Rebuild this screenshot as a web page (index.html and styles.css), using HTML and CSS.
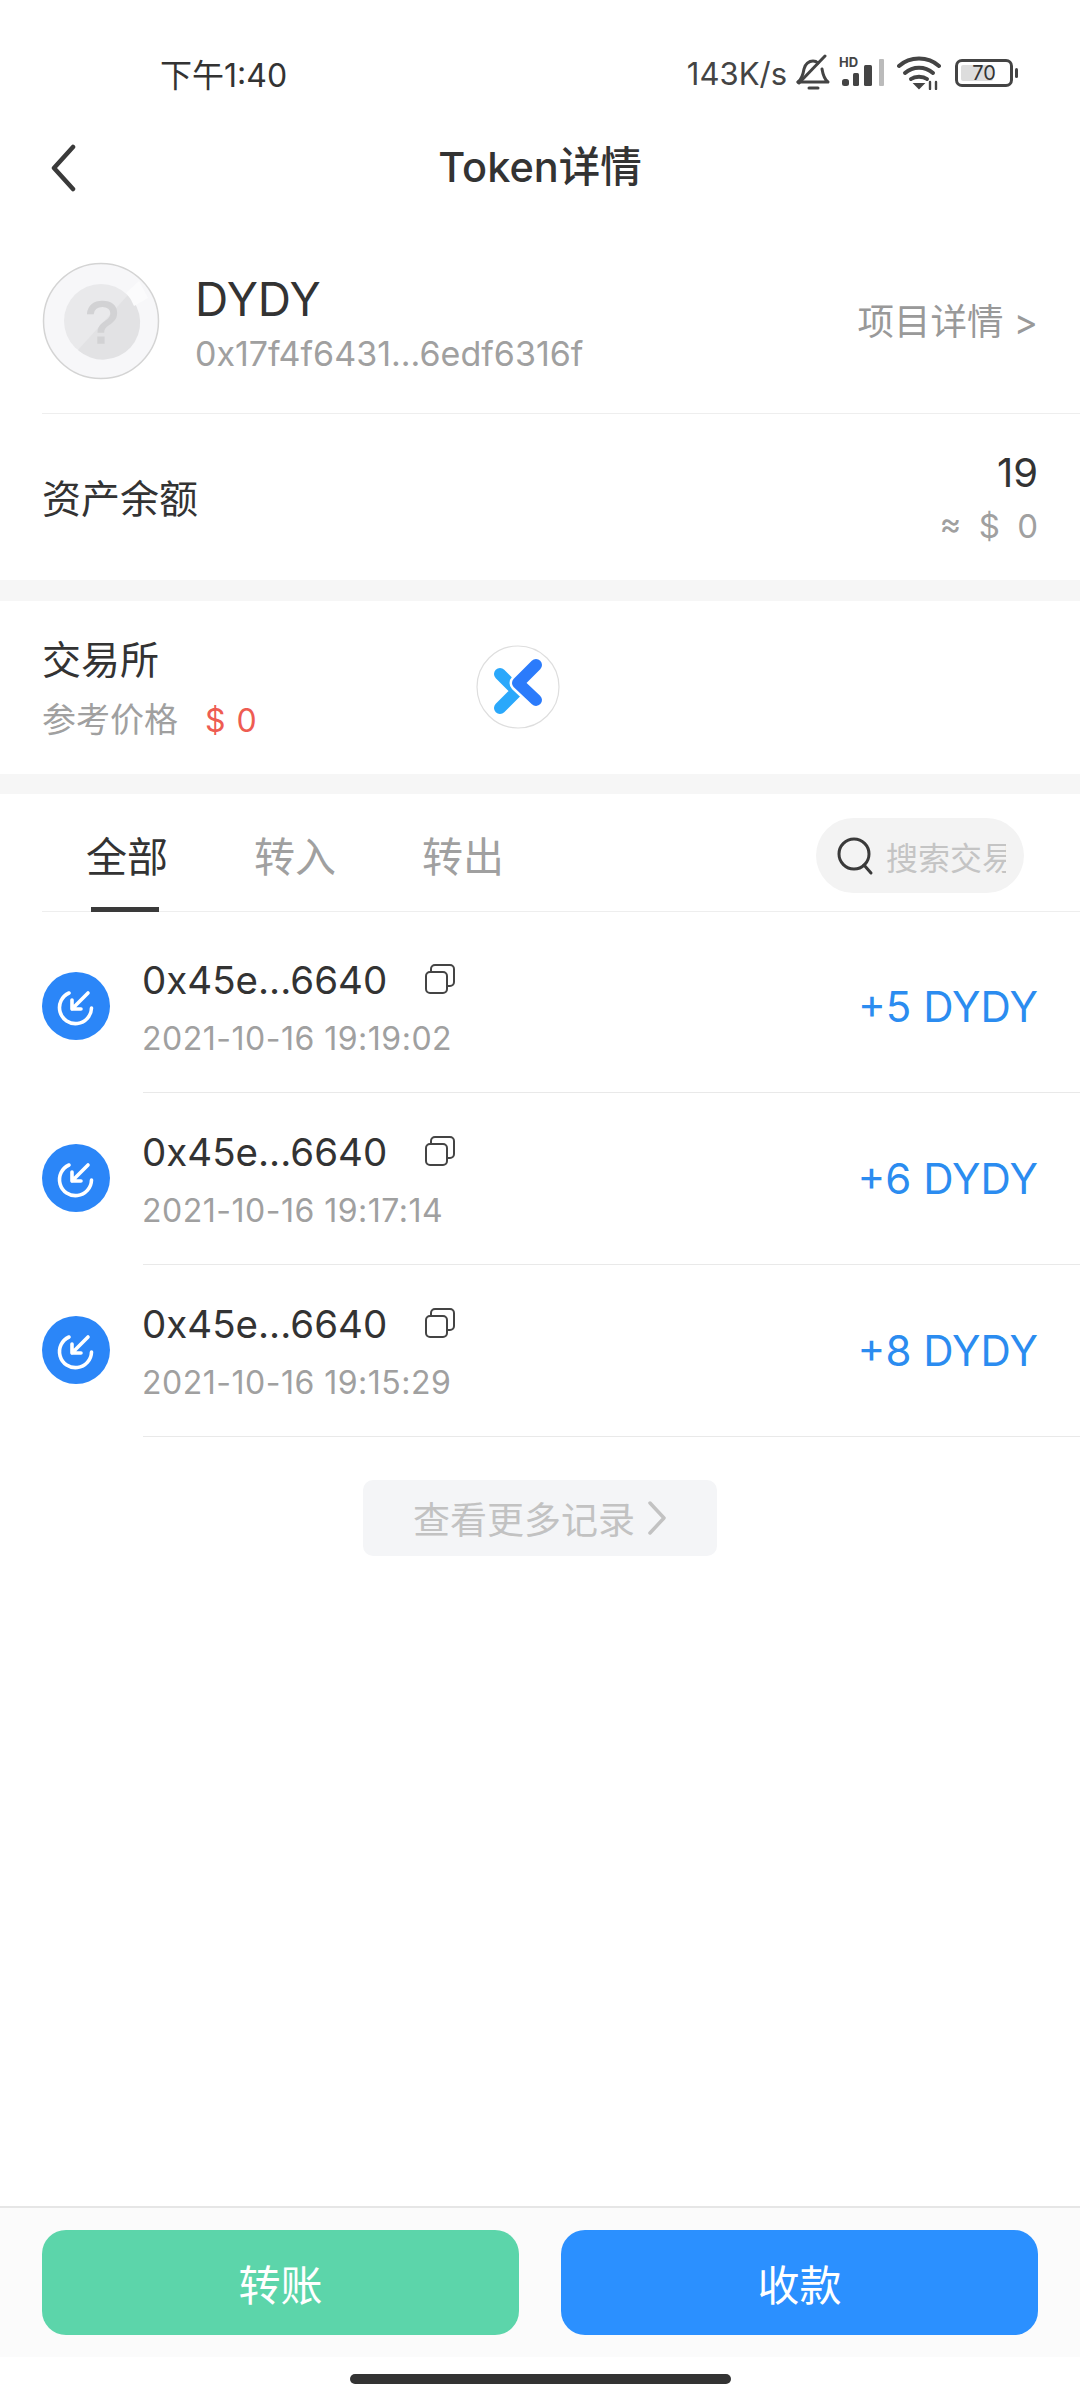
FILE: index.html
```html
<!DOCTYPE html>
<html lang="zh-CN">
<head>
  <meta charset="UTF-8">
  <title>Token详情</title>
  <link rel="stylesheet" href="styles.css">
</head>
<body>
<div class="page">

  <div class="status">
    <span class="time">下午1:40</span>
    <div class="status-right">
      <span class="speed">143K/s</span>
      <svg class="ic-bell" width="36" height="38" viewBox="0 0 36 38" fill="none" stroke="#444" stroke-width="3" stroke-linecap="round" stroke-linejoin="round">
        <path d="M3 28c4-3 5-7 6-13 1-5 5-8 9-8 2 0 4 1 5 2"/>
        <path d="M27 15c1 6 2 10 6 13H3"/>
        <path d="M4 29L30 2"/>
        <path d="M14 34h9" stroke-width="3"/>
      </svg>
      <svg class="ic-signal" width="48" height="36" viewBox="0 -4 48 36">
        <text class="hd" x="0" y="10">HD</text>
        <rect x="3" y="22" width="7" height="7" rx="2.500" fill="#444"/>
        <rect x="14" y="16" width="6" height="13" rx="1.500" fill="#444"/>
        <rect x="25" y="8" width="8" height="21" rx="1.500" fill="#444"/>
        <rect x="40" y="2" width="5" height="27" rx="1" fill="#bbb"/>
      </svg>
      <svg class="ic-wifi" width="44" height="34" viewBox="0 0 44 34" fill="none" stroke="#444" stroke-width="4" stroke-linecap="round">
        <path d="M2 10c11-10 29-10 40 0"/>
        <path d="M8 17c8-7 20-7 28 0"/>
        <path d="M14 23c4-3 12-3 16 0"/>
        <path d="M18 28l4 4 4-4z" fill="#444" stroke-width="2"/>
        <path d="M33 26v7M39 26v7" stroke-width="2.400"/>
      </svg>
      <div class="battery">
        <div class="battery-body"><span class="battery-fill"></span><span class="battery-num">70</span></div>
        <span class="battery-nub"></span>
      </div>
    </div>
  </div>

  <div class="nav">
    <svg class="back" width="30" height="48" viewBox="0 0 30 48" fill="none" stroke="#3a3a3a" stroke-width="4.500" stroke-linecap="round" stroke-linejoin="round">
      <path d="M25 3L6 24l19 21"/>
    </svg>
    <span class="nav-title">Token详情</span>
  </div>

  <div class="token">
    <svg class="token-logo" width="118" height="118" viewBox="0 0 118 118">
      <circle cx="59" cy="59" r="57.500" fill="#f7f7f9" stroke="#d4d4d4" stroke-width="1.500"/>
      <circle cx="59" cy="59" r="37" fill="#e9e9eb"/>
      <path d="M86 33L36 88A37 37 0 0 0 86 33z" fill="#e2e2e4"/>
      <path d="M84 31L97 19 106 36 92 44a37 37 0 0 0-8-13z" fill="#fbfbfc"/>
      <text class="token-q" x="60" y="81">?</text>
    </svg>
    <div class="token-info">
      <div class="token-name">DYDY</div>
      <div class="token-addr">0x17f4f6431...6edf6316f</div>
    </div>
    <div class="token-link">项目详情 &gt;</div>
  </div>

  <div class="balance">
    <span class="balance-label">资产余额</span>
    <div class="balance-right">
      <div class="balance-num">19</div>
      <div class="balance-usd">≈ $ 0</div>
    </div>
  </div>

  <div class="band"></div>

  <div class="exchange">
    <div class="exchange-info">
      <div class="exchange-title">交易所</div>
      <div class="exchange-price">参考价格<span class="price-red">$ 0</span></div>
    </div>
    <svg class="exchange-logo" width="84" height="84" viewBox="0 0 84 84" fill="none" stroke-linecap="round" stroke-linejoin="round">
      <circle cx="42" cy="42" r="41" fill="#fff" stroke="#dedede" stroke-width="1.200"/>
      <path d="M24 29l17 17-17 17" stroke="#2aa8fb" stroke-width="12"/>
      <path d="M60 20L42 38l18 17" stroke="#fff" stroke-width="17"/>
      <path d="M60 20L42 38l18 17" stroke="#2b7bfb" stroke-width="12"/>
    </svg>
  </div>

  <div class="band band-short"></div>

  <div class="tabs">
    <div class="tab tab-on">全部</div>
    <div class="tab">转入</div>
    <div class="tab">转出</div>
    <div class="search">
      <svg width="40" height="40" viewBox="0 0 40 40" fill="none" stroke="#3a3a3a" stroke-width="3" stroke-linecap="round">
        <circle cx="18" cy="18" r="15"/>
        <path d="M28 29l7 8"/>
      </svg>
      <span class="search-text">搜索交易</span>
    </div>
  </div>

  <div class="list">
    <div class="row">
      <svg class="row-icon" width="68" height="68" viewBox="0 0 68 68" fill="none" stroke="#fff" stroke-width="3.600" stroke-linecap="round" stroke-linejoin="round">
        <circle cx="34" cy="34" r="34" fill="#2b86f8" stroke="none"/>
        <path d="M27 21a16 16 0 1 0 22.500 15"/>
        <path d="M46 21L30 37M30 28v9h9"/>
      </svg>
      <div class="row-body">
        <div class="row-main">
          <div class="row-addr">
            <span>0x45e...6640</span>
            <svg class="copy" width="30" height="30" viewBox="0 0 30 30" fill="none" stroke="#444" stroke-width="2" stroke-linejoin="round">
              <rect x="1" y="8" width="21" height="21" rx="4"/>
              <path d="M6 8V5a4 4 0 0 1 4-4h15a4 4 0 0 1 4 4v13a4 4 0 0 1-4 4h-3"/>
            </svg>
          </div>
          <div class="row-date">2021-10-16 19:19:02</div>
        </div>
        <div class="row-amount">+5 DYDY</div>
      </div>
    </div>
    <div class="row">
      <svg class="row-icon" width="68" height="68" viewBox="0 0 68 68" fill="none" stroke="#fff" stroke-width="3.600" stroke-linecap="round" stroke-linejoin="round">
        <circle cx="34" cy="34" r="34" fill="#2b86f8" stroke="none"/>
        <path d="M27 21a16 16 0 1 0 22.500 15"/>
        <path d="M46 21L30 37M30 28v9h9"/>
      </svg>
      <div class="row-body">
        <div class="row-main">
          <div class="row-addr">
            <span>0x45e...6640</span>
            <svg class="copy" width="30" height="30" viewBox="0 0 30 30" fill="none" stroke="#444" stroke-width="2" stroke-linejoin="round">
              <rect x="1" y="8" width="21" height="21" rx="4"/>
              <path d="M6 8V5a4 4 0 0 1 4-4h15a4 4 0 0 1 4 4v13a4 4 0 0 1-4 4h-3"/>
            </svg>
          </div>
          <div class="row-date">2021-10-16 19:17:14</div>
        </div>
        <div class="row-amount">+6 DYDY</div>
      </div>
    </div>
    <div class="row">
      <svg class="row-icon" width="68" height="68" viewBox="0 0 68 68" fill="none" stroke="#fff" stroke-width="3.600" stroke-linecap="round" stroke-linejoin="round">
        <circle cx="34" cy="34" r="34" fill="#2b86f8" stroke="none"/>
        <path d="M27 21a16 16 0 1 0 22.500 15"/>
        <path d="M46 21L30 37M30 28v9h9"/>
      </svg>
      <div class="row-body">
        <div class="row-main">
          <div class="row-addr">
            <span>0x45e...6640</span>
            <svg class="copy" width="30" height="30" viewBox="0 0 30 30" fill="none" stroke="#444" stroke-width="2" stroke-linejoin="round">
              <rect x="1" y="8" width="21" height="21" rx="4"/>
              <path d="M6 8V5a4 4 0 0 1 4-4h15a4 4 0 0 1 4 4v13a4 4 0 0 1-4 4h-3"/>
            </svg>
          </div>
          <div class="row-date">2021-10-16 19:15:29</div>
        </div>
        <div class="row-amount">+8 DYDY</div>
      </div>
    </div>
  </div>

  <div class="more">
    <span>查看更多记录</span>
    <svg width="20" height="34" viewBox="0 0 20 34" fill="none" stroke="#c2c2c2" stroke-width="3.500" stroke-linecap="round" stroke-linejoin="round">
      <path d="M3 2l14 15L3 32"/>
    </svg>
  </div>

  <div class="footer">
    <div class="btn btn-green">转账</div>
    <div class="btn btn-blue">收款</div>
  </div>
  <div class="home"><span class="home-bar"></span></div>

</div>
</body>
</html>
```

FILE: styles.css
```css
* {
  box-sizing: border-box;
}

html, body {
  margin: 0;
  background: #fff;
}

body {
  font-family: Inter, "Noto Sans CJK SC", sans-serif;
  color: #333;
}

.page {
  width: 1080px;
  height: 2400px;
  display: flex;
  flex-direction: column;
  overflow: hidden;
}

/* status bar */
.status {
  height: 110px;
  flex: none;
  display: flex;
  align-items: center;
  justify-content: space-between;
  padding: 40px 62px 0 160px;
}

.time {
  font-size: 32px;
  margin-top: -4px;
  color: #333;
}

.status-right {
  display: flex;
  align-items: center;
  margin-top: -4px;
}

.speed {
  font-size: 31px;
  color: #444;
}

.ic-bell {
  margin-left: 8px;
}

.ic-signal {
  margin-left: 8px;
  margin-top: -4px;
}

.hd {
  font-family: Inter, sans-serif;
  font-size: 13px;
  font-weight: 700;
  fill: #444;
}

.ic-wifi {
  margin-left: 10px;
}

.battery {
  display: flex;
  align-items: center;
  margin-left: 14px;
}

.battery-body {
  width: 58px;
  height: 28px;
  border: 3px solid #444;
  border-radius: 7px;
  padding: 3px;
  position: relative;
}

.battery-fill {
  display: block;
  width: 70%;
  height: 100%;
  background: #ddd;
  border-radius: 2px;
}

.battery-num {
  position: absolute;
  top: 0;
  left: 0;
  right: 0;
  text-align: center;
  font-size: 20px;
  line-height: 22px;
  color: #333;
}

.battery-nub {
  width: 3px;
  height: 10px;
  margin-left: 2px;
  background: #444;
  border-radius: 2px;
}

/* nav */
.nav {
  height: 114px;
  flex: none;
  display: flex;
  align-items: center;
  justify-content: center;
  position: relative;
}

.back {
  position: absolute;
  left: 48px;
  top: 34px;
}

.nav-title {
  font-size: 41.5px;
  font-weight: 500;
  margin-top: -6px;
  color: #333;
}

/* token head */
.token {
  flex: none;
  height: 190px;
  margin-left: 42px;
  padding: 38px 42px 0 0;
  display: flex;
  align-items: flex-start;
  border-bottom: 1px solid #eee;
}

.token-q {
  font-family: "Liberation Sans", sans-serif;
  font-size: 60px;
  text-anchor: middle;
  fill: #d2d2d4;
  stroke: #d2d2d4;
  stroke-width: 1.5px;
}

.token-info {
  margin-left: 35px;
  flex: 1;
}

.token-name {
  font-size: 46px;
  line-height: 54px;
  margin-top: 10px;
  color: #333;
}

.token-addr {
  font-size: 34px;
  line-height: 40px;
  margin-top: 8px;
  color: #a0a0a0;
}

.token-link {
  font-size: 36.5px;
  line-height: 44px;
  margin-top: 38px;
  color: #999;
}

/* balance */
.balance {
  flex: none;
  height: 166px;
  padding: 0 42px;
  display: flex;
  align-items: center;
  justify-content: space-between;
}

.balance-label {
  font-size: 39px;
  margin-top: -2px;
  color: #333;
}

.balance-right {
  text-align: right;
}

.balance-num {
  font-size: 40px;
  line-height: 48px;
  margin-top: 1px;
  color: #333;
}

.balance-usd {
  font-size: 33px;
  line-height: 40px;
  margin-top: 9px;
  color: #a0a0a0;
  word-spacing: 8px;
}

.band {
  flex: none;
  height: 21px;
  background: #f6f6f6;
}

.band-short {
  height: 20px;
}

/* exchange */
.exchange {
  flex: none;
  height: 173px;
  padding-left: 42px;
  display: flex;
  align-items: center;
}

.exchange-info {
  width: 434px;
}

.exchange-title {
  font-size: 39px;
  line-height: 46px;
  margin-top: 4px;
  color: #333;
}

.exchange-price {
  font-size: 34px;
  line-height: 42px;
  margin-top: 16px;
  color: #a0a0a0;
}

.price-red {
  margin-left: 27px;
  font-size: 32px;
  color: #ee5c52;
  word-spacing: 2px;
}

.exchange-logo {
  margin-top: -2px;
}

/* tabs */
.tabs {
  flex: none;
  height: 118px;
  margin-left: 42px;
  padding: 0 56px 0 44px;
  display: flex;
  align-items: center;
  gap: 86px;
  border-bottom: 1px solid #eee;
  position: relative;
}

.tab {
  font-size: 41px;
  line-height: 126px;
  height: 118px;
  color: #a0a0a0;
  position: relative;
}

.tab-on {
  color: #333;
}

.tab-on::after {
  content: "";
  position: absolute;
  left: 5px;
  right: 9px;
  bottom: 0;
  height: 5px;
  background: #3a3a3a;
}

.search {
  width: 208px;
  height: 75px;
  margin-left: auto;
  margin-top: 6px;
  padding: 0 0 0 20px;
  display: flex;
  align-items: center;
  gap: 10px;
  background: #f3f3f3;
  border-radius: 38px;
  overflow: hidden;
  flex: none;
}

.search svg {
  flex: none;
}

.search-text {
  font-size: 32px;
  color: #c4c4c4;
  width: 120px;
  flex: none;
  overflow: hidden;
  white-space: nowrap;
}

/* records */
.list {
  flex: none;
  margin-top: 9px;
  padding-left: 42px;
}

.row {
  height: 172px;
  display: flex;
  align-items: flex-start;
}

.row-icon {
  flex: none;
  margin-top: 51px;
}

.row-body {
  flex: 1;
  height: 172px;
  margin-left: 33px;
  padding-right: 42px;
  display: flex;
  align-items: center;
  justify-content: space-between;
  border-bottom: 1px solid #e9e9e9;
}

.row-addr {
  display: flex;
  align-items: center;
  font-size: 38.5px;
  line-height: 46px;
  color: #333;
  margin-left: -1px;
}

.copy {
  margin-left: 38px;
  margin-top: -2px;
}

.row-date {
  font-size: 32px;
  line-height: 40px;
  letter-spacing: 0.5px;
  margin: 16px 0 -3px -1px;
  color: #a0a0a0;
}

.row-amount {
  font-size: 42px;
  color: #2b8cf0;
}

.more {
  flex: none;
  width: 354px;
  height: 76px;
  margin: 43px auto 0;
  display: flex;
  align-items: center;
  justify-content: center;
  gap: 12px;
  background: #f4f5f7;
  border-radius: 10px;
  font-size: 37px;
  color: #c2c2c2;
}

/* bottom actions */
.footer {
  margin-top: auto;
  flex: none;
  height: 151px;
  padding: 22px 42px 0;
  display: flex;
  gap: 42px;
  background: #fbfbfb;
  border-top: 2px solid #e6e6e6;
}

.btn {
  flex: 1;
  height: 105px;
  border-radius: 24px;
  display: flex;
  align-items: center;
  justify-content: center;
  font-size: 42px;
  color: #fff;
}

.btn-green {
  background: #5cd5aa;
}

.btn-blue {
  background: #2b90ff;
}

.home {
  flex: none;
  height: 43px;
  display: flex;
  justify-content: center;
  padding-top: 17px;
}

.home-bar {
  width: 381px;
  height: 10px;
  background: #333;
  border-radius: 5px;
}
```
